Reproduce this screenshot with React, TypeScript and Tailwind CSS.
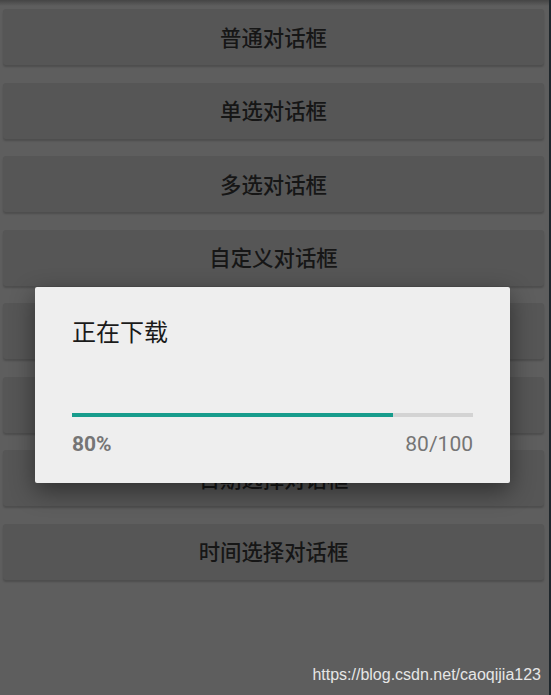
const cjk = { fontFamily: '"Noto Sans CJK SC", "Noto Sans", sans-serif' };

const items = [
  "普通对话框",
  "单选对话框",
  "多选对话框",
  "自定义对话框",
  "列表对话框",
  "进度条对话框",
  "日期选择对话框",
  "时间选择对话框",
];

export default function App() {
  const progress = 80;
  return (
    <div className="relative flex h-[695px] w-[551px] overflow-hidden bg-[#5e5e5e]">
      <div className="flex flex-1 flex-col">
        <div className="h-[6px] bg-gradient-to-b from-[#454545] to-[#5e5e5e]" />
        <div className="flex flex-col gap-[17.5px] pl-[3px] pr-[5px] pt-[3px]">
          {items.map((label) => (
            <div
              key={label}
              className="flex h-[56px] items-center justify-center rounded-[3px] bg-[#565656] text-[21.4px] font-medium text-[#161616] shadow-[0_2px_2px_rgba(0,0,0,0.18)]"
              style={cjk}
            >
              {label}
            </div>
          ))}
        </div>
        <div className="mt-auto flex justify-end pb-[8px] pr-[8px]">
          <span className="text-[16px] text-[#e6e6e6]" style={{ fontFamily: '"Liberation Sans", Arial, sans-serif' }}>
            https://blog.csdn.net/caoqijia123
          </span>
        </div>
      </div>
      <div className="w-[2px] bg-[#1e262b]" />

      <div className="absolute left-[35px] top-[287px] flex h-[196px] w-[475px] flex-col rounded-[2px] bg-[#eeeeee] px-[37px] shadow-[0_8px_24px_rgba(0,0,0,0.45)]">
        <div className="mt-[28px] text-[24px] leading-[32px] text-[#1a1a1a]" style={cjk}>
          正在下载
        </div>
        <div className="mt-[66px] h-[4px] w-full bg-[#d3d3d3]">
          <div className="h-full bg-[#179c8c]" style={{ width: `${progress}%` }} />
        </div>
        <div
          className="mt-[14px] flex justify-between text-[21px] leading-[26px] text-[#757575]"
          style={{ fontFamily: "Roboto, sans-serif" }}
        >
          <span className="font-bold">{progress}%</span>
          <span>{progress}/100</span>
        </div>
      </div>
    </div>
  );
}
